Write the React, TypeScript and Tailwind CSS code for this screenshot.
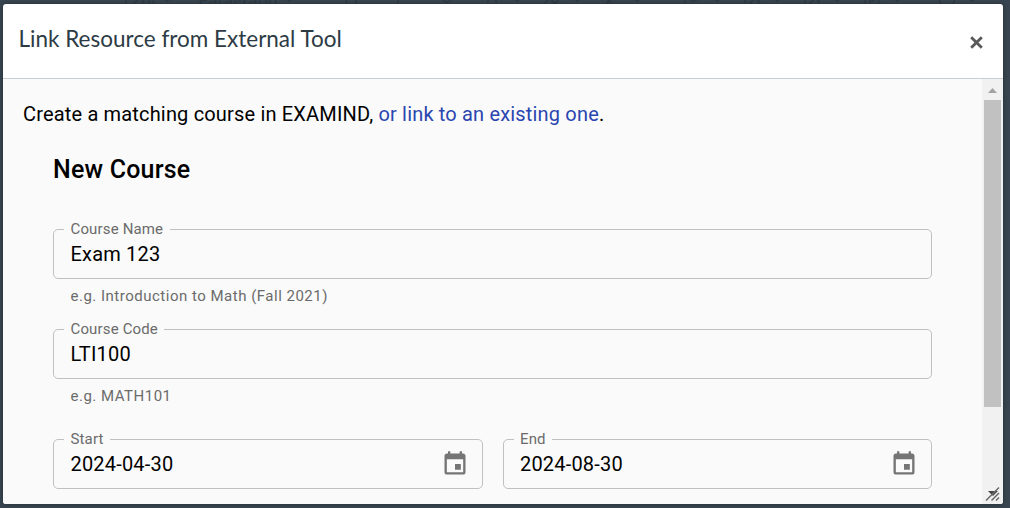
import type { ReactNode } from "react";
import { Baseline, Bold, ChevronDown, Circle, Highlighter, Image, Italic, Link, SquarePlay, Superscript, Underline } from "lucide-react";

function Field({ label, value, icon, helper }: { label: string; value: string; icon?: ReactNode; helper?: string }) {
  return (
    <div className="min-w-0 flex-1">
      <div className="relative flex h-[50px] items-center justify-between rounded-[5px] border border-[#c0c0c0] pl-[16.5px] pr-[13px]">
        <span className="absolute -top-[9px] left-[10px] bg-[#fafafa] px-[6.5px] text-[15px] leading-[16px] tracking-[0.15px] text-[#6b6b6b]">
          {label}
        </span>
        <span className="text-[20px] leading-[24px] tracking-[0.19px] text-black">{value}</span>
        {icon}
      </div>
      {helper && (
        <p className="mt-[9px] pl-[17.5px] text-[15px] leading-[17px] tracking-[0.5px] text-[#6b6b6b]">{helper}</p>
      )}
    </div>
  );
}

function CalendarIcon() {
  return (
    <svg viewBox="0 0 24 24" className="h-[28px] w-[28px] fill-[#757575]">
      <path d="M17 12h-5v5h5v-5zM16 1v2H8V1H6v2H5c-1.11 0-1.99.9-1.99 2L3 19c0 1.1.89 2 2 2h14c1.1 0 2-.9 2-2V5c0-1.1-.9-2-2-2h-1V1h-2zm3 18H5V8h14v11z" />
    </svg>
  );
}

function ToolGroup({ children }: { children: ReactNode }) {
  return (
    <span className="flex w-[60px] items-center gap-[7px]">
      {children}
      <ChevronDown size={18} />
    </span>
  );
}

function EditorToolbar() {
  return (
    <div className="absolute left-0 top-0 h-[4px] w-full overflow-hidden text-[#2f3c46]">
      <div className="-mt-[13px] flex h-[24px] items-center whitespace-nowrap pl-[120px] font-['Lato'] text-[18px] leading-[24px]">
        <span className="w-[38px]">12pt</span>
        <ChevronDown size={18} />
        <span className="ml-[22px] w-[82px]">Paragraph</span>
        <ChevronDown size={18} />
        <div className="ml-[44px] flex w-[141px] items-center gap-[30px]">
          <Bold size={18} />
          <Italic size={18} />
          <Underline size={18} />
        </div>
        <ToolGroup><Baseline size={18} /></ToolGroup>
        <ToolGroup><Highlighter size={18} /></ToolGroup>
        <ToolGroup><Superscript size={18} /></ToolGroup>
        <div className="ml-[20px] flex">
          <ToolGroup><Link size={18} /></ToolGroup>
          <ToolGroup><Image size={18} /></ToolGroup>
          <ToolGroup><Image size={18} /></ToolGroup>
          <ToolGroup><SquarePlay size={18} /></ToolGroup>
        </div>
        <div className="ml-[15px] flex">
          <ToolGroup><Circle size={18} /></ToolGroup>
        </div>
      </div>
    </div>
  );
}

export default function App() {
  return (
    <div className="relative h-[508px] w-[1010px] overflow-hidden bg-[#394651] pl-[3px] pt-[4px] font-['Roboto',sans-serif]">
      <EditorToolbar />
      <div className="relative flex h-[500px] w-[1000px] flex-col overflow-hidden rounded-[3px] bg-white shadow-[0_0_5px_rgba(0,0,0,0.4)]">
        <header className="flex h-[75px] shrink-0 items-center justify-between border-b border-[#c7cdd1] pl-[15.5px] pr-[20px]">
          <h1 className="-mt-[5px] font-['Lato',sans-serif] text-[22.5px] leading-[30px] text-[#2d3b45]">
            Link Resource from External Tool
          </h1>
          <button aria-label="Close" className="mt-[3px]">
            <svg viewBox="0 0 13 13" className="h-[13px] w-[13px] fill-none stroke-[#595959] stroke-[2.8]">
              <path d="M1.200 1.200l10.600 10.600M11.800 1.200L1.200 11.800" />
            </svg>
          </button>
        </header>
        <div className="flex min-h-0 flex-1 bg-[#fafafa]">
          <main className="min-w-0 flex-1 overflow-hidden pl-[20px] pt-[23px]">
            <p className="whitespace-nowrap text-[20px] leading-[24px] tracking-[0.17px] text-black">
              Create a matching course in EXAMIND, <a className="text-[#2a46b0]">or link to an existing one</a>.
            </p>
            <section className="ml-[30px] w-[879px]">
              <h2 className="mt-[29px] text-[25px] font-medium leading-[30px] tracking-[0.19px] text-black">New Course</h2>
              <div className="mt-[44px]">
                <Field label="Course Name" value="Exam 123" helper="e.g. Introduction to Math (Fall 2021)" />
              </div>
              <div className="mt-[24px]">
                <Field label="Course Code" value="LTI100" helper="e.g. MATH101" />
              </div>
              <div className="mt-[34px] flex gap-[20px]">
                <Field label="Start" value="2024-04-30" icon={<CalendarIcon />} />
                <Field label="End" value="2024-08-30" icon={<CalendarIcon />} />
              </div>
            </section>
          </main>
          <div className="flex w-[21px] flex-col items-center bg-[#f1f1f1]">
            <svg viewBox="0 0 9 5" className="mt-[9px] h-[5px] w-[9px] shrink-0 fill-[#a3a3a3]">
              <path d="M0 5h9L4.500 0z" />
            </svg>
            <div className="mt-[7px] h-[307px] w-[17px] bg-[#c1c1c1]" />
          </div>
        </div>
        <svg viewBox="0 0 16 15" className="absolute bottom-[3px] right-[2px] h-[15px] w-[16px]">
          <path d="M3 5h10L8 10z" fill="#444" />
          <path d="M1 14.500L14 1.500M6.500 14.500L14 7M11 14.500l3-3" stroke="#6a6a6a" strokeWidth="1.5" fill="none" />
        </svg>
      </div>
    </div>
  );
}
